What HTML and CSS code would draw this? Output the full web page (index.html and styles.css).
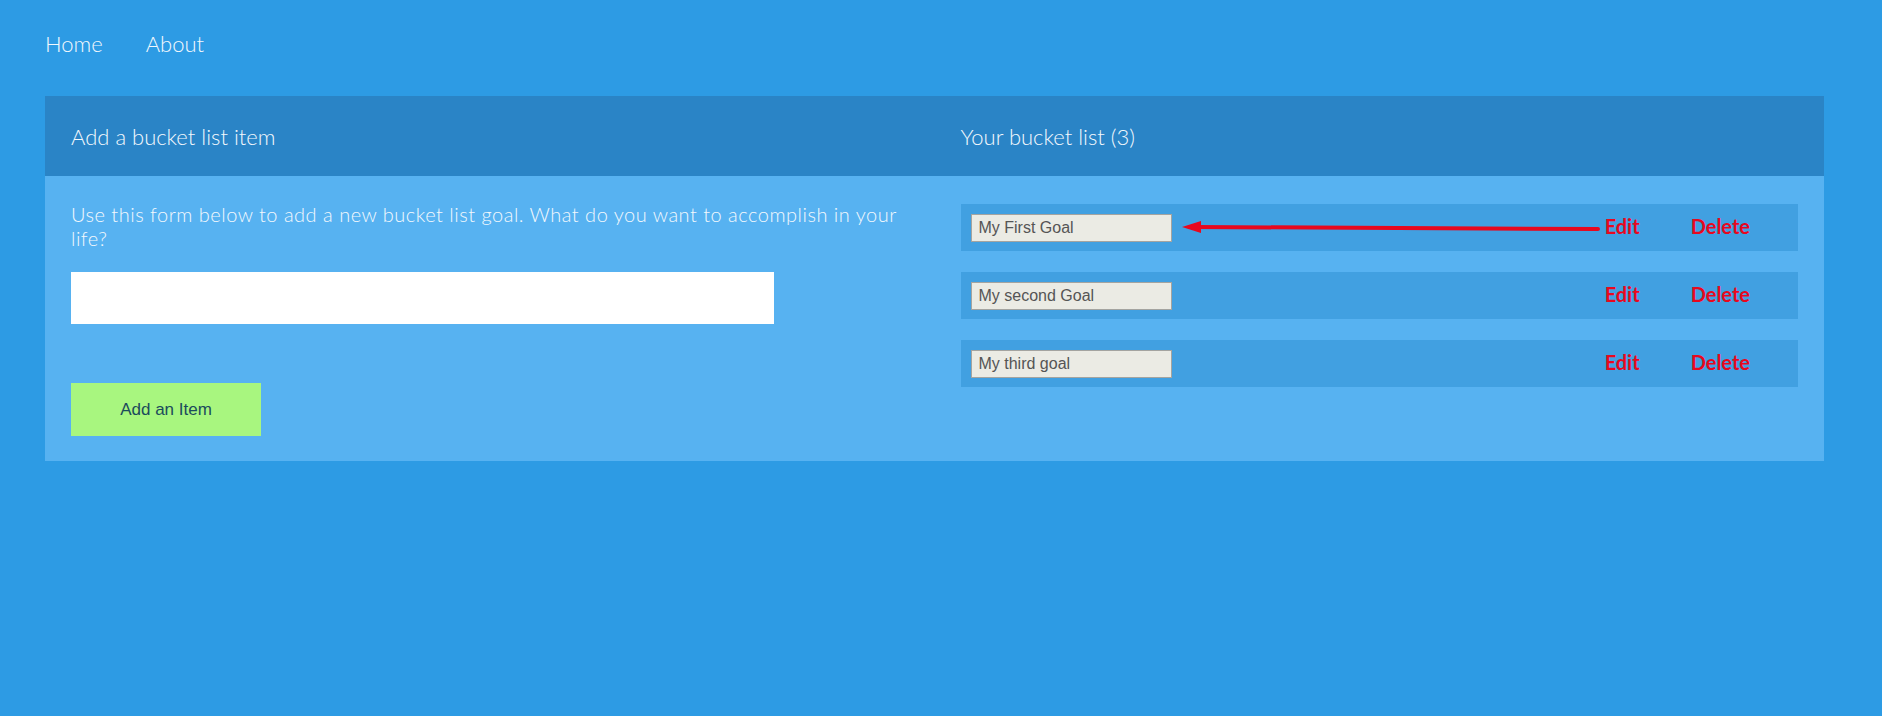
FILE: index.html
```html
<!DOCTYPE html>
<html lang="en">

<head>
    <meta charset="UTF-8">
    <title>Bucket List</title>
    <link rel="stylesheet" href="styles.css">
</head>

<body>
    <nav class="nav">
        <a href="#">Home</a>
        <a href="#">About</a>
    </nav>

    <div class="panel">
        <div class="panel-head">Add a bucket list item</div>
        <div class="panel-head">Your bucket list (3)</div>

        <div class="panel-body">
            <p class="intro">Use this form below to add a new bucket list goal. What do you want to accomplish in your life?</p>
            <input type="text" class="goal-input">
            <button class="add-btn">Add an Item</button>
        </div>

        <div class="panel-body list">
            <div class="goal-row">
                <input type="text" class="goal-name" value="My First Goal" disabled>
                <div class="actions">
                    <a href="#">Edit</a>
                    <a href="#">Delete</a>
                </div>
            </div>
            <div class="goal-row">
                <input type="text" class="goal-name" value="My second Goal" disabled>
                <div class="actions">
                    <a href="#">Edit</a>
                    <a href="#">Delete</a>
                </div>
            </div>
            <div class="goal-row">
                <input type="text" class="goal-name" value="My third goal" disabled>
                <div class="actions">
                    <a href="#">Edit</a>
                    <a href="#">Delete</a>
                </div>
            </div>
        </div>
    </div>

    <!-- annotation arrow -->
    <svg class="arrow" width="430" height="20" viewBox="0 0 430 20">
        <line x1="16" y1="9" x2="418" y2="11" stroke="#e8081e" stroke-width="4" stroke-linecap="round" />
        <polygon points="2,9 21,3 21,15" fill="#e8081e" />
    </svg>
</body>

</html>
```

FILE: styles.css
```css
body {
    margin: 0;
    background: #2d9be4;
    font-family: Lato, "Open Sans", sans-serif;
    font-weight: 300;
    color: #f2f8fd;
}

.nav {
    display: flex;
    gap: 43px;
    padding: 30px 45px 0;
    height: 66px;
}

.nav a {
    color: #f2f8fd;
    text-decoration: none;
    font-size: 22px;
    line-height: 28px;
}

.panel {
    display: grid;
    grid-template-columns: 1fr 1fr;
    margin: 0 58px 0 45px;
}

.panel-head {
    background: #2a84c6;
    height: 80px;
    padding: 0 26px;
    display: flex;
    align-items: center;
    font-size: 22px;
}

.panel-body {
    background: #57b2f1;
    padding: 26px 26px 25px;
}

.intro {
    margin: 0 0 22px;
    font-size: 20px;
    line-height: 24px;
    letter-spacing: 0.5px;
}

.goal-input {
    display: block;
    width: 703px;
    height: 52px;
    box-sizing: border-box;
    border: none;
    background: #fff;
    margin-bottom: 59px;
}

.add-btn {
    display: block;
    width: 190px;
    height: 53px;
    border: none;
    background: #a8f67f;
    color: #1b4b5c;
    font-family: "Liberation Sans", Arial, sans-serif;
    font-size: 17px;
    cursor: pointer;
}

.list {
    padding-top: 28px;
    display: flex;
    flex-direction: column;
    gap: 21px;
}

.goal-row {
    background: #41a0e1;
    height: 47px;
    padding: 0 48px 0 10px;
    display: flex;
    align-items: center;
}

.goal-name {
    width: 201px;
    height: 28px;
    box-sizing: border-box;
    border: 1px solid #a4a4a0;
    background: #ebebe4;
    color: #555;
    padding: 0 7px;
    font-family: "Liberation Sans", Arial, sans-serif;
    font-size: 16px;
}

.actions {
    margin-left: auto;
    display: flex;
    gap: 51px;
    padding-bottom: 4px;
}

.actions a {
    color: #e8081e;
    text-decoration: none;
    font-weight: 700;
    font-size: 20px;
}

.arrow {
    position: absolute;
    left: 1180px;
    top: 218px;
}
```
